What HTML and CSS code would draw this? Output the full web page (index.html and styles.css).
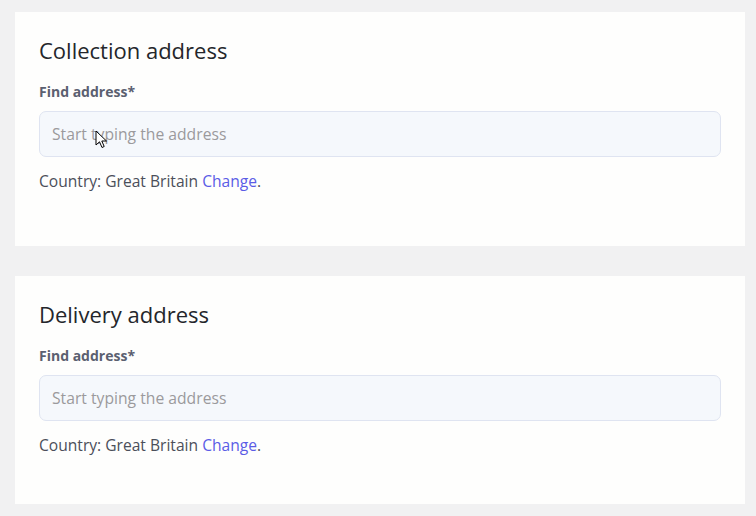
FILE: index.html
```html
<!DOCTYPE html>
<html>
<head>
<meta charset="utf-8">
<link rel="stylesheet" href="styles.css">
</head>
<body>
<div class="page">
  <section class="card card-first">
    <h2 class="title">Collection address</h2>
    <label class="label">Find address*</label>
    <div class="field">
      <input class="input" type="text" placeholder="Start typing the address">
      <svg class="cursor" width="14" height="20" viewBox="0 0 14 20"><path d="M1 1 L1 15 L4.5 11.8 L7 17.5 L9.2 16.5 L6.8 11 L11.5 11 Z" fill="#fff" stroke="#000" stroke-width="1" stroke-linejoin="round"/></svg>
    </div>
    <p class="country">Country: Great Britain <a class="link" href="#">Change</a>.</p>
  </section>
  <section class="card">
    <h2 class="title">Delivery address</h2>
    <label class="label">Find address*</label>
    <div class="field">
      <input class="input" type="text" placeholder="Start typing the address">
    </div>
    <p class="country">Country: Great Britain <a class="link" href="#">Change</a>.</p>
  </section>
</div>
</body>
</html>
```
FILE: styles.css
```css
* { box-sizing: border-box; }
html, body { margin: 0; padding: 0; }
body {
  background: #f1f1f2;
  font-family: "Open Sans", "Liberation Sans", sans-serif;
  width: 756px;
  height: 516px;
  overflow: hidden;
}
.page {
  padding: 12px 11px 0 15px;
  display: flex;
  flex-direction: column;
  gap: 30px;
}
.card {
  background: #fefefd;
  padding: 24px 24px 0 24px;
  height: 228px;
}
.card-first { height: 234px; }
.title {
  margin: 0;
  font-size: 22px;
  font-weight: 500;
  color: #24262b;
  line-height: 28px;
}
.label {
  display: block;
  margin-top: 20px;
  font-size: 14px;
  font-weight: 700;
  color: #5b6070;
  line-height: 16px;
}
.field {
  position: relative;
  margin-top: 11px;
}
.input {
  display: block;
  width: 682px;
  height: 46px;
  border: 1px solid #dfe4f1;
  border-radius: 7px;
  background: #f5f8fc;
  padding: 0 12px;
  font-family: inherit;
  font-size: 15.7px;
  color: #333;
  outline: none;
}
.input::placeholder { color: #9b9a9c; }
.cursor {
  position: absolute;
  left: 56px;
  top: 19px;
}
.country {
  margin: 14px 0 0 0;
  font-size: 15.6px;
  color: #4b4f5a;
  line-height: 20px;
}
.link {
  color: #5b5ce6;
  text-decoration: none;
}
```
